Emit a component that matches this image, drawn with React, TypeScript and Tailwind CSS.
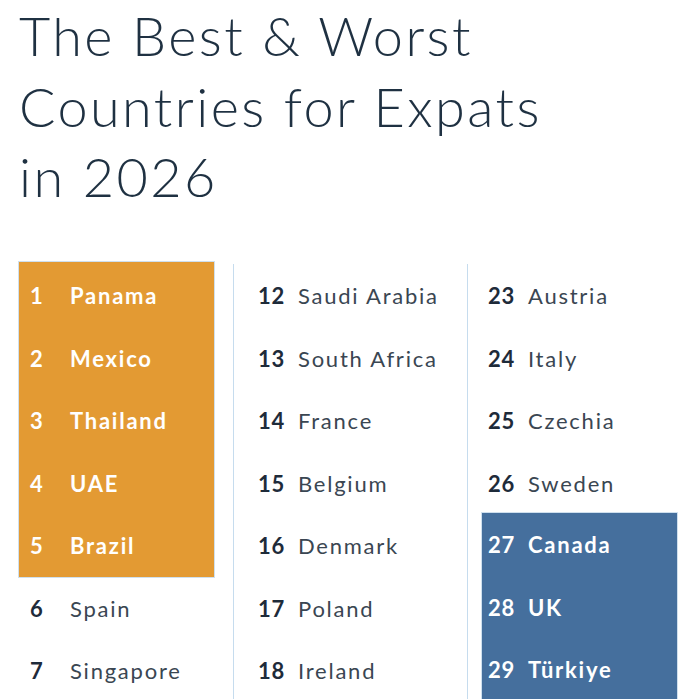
import React from "react";

type Item = { n: number; name: string };

const col1: Item[] = [
  { n: 1, name: "Panama" },
  { n: 2, name: "Mexico" },
  { n: 3, name: "Thailand" },
  { n: 4, name: "UAE" },
  { n: 5, name: "Brazil" },
];
const col1b: Item[] = [
  { n: 6, name: "Spain" },
  { n: 7, name: "Singapore" },
];
const col2: Item[] = [
  { n: 12, name: "Saudi Arabia" },
  { n: 13, name: "South Africa" },
  { n: 14, name: "France" },
  { n: 15, name: "Belgium" },
  { n: 16, name: "Denmark" },
  { n: 17, name: "Poland" },
  { n: 18, name: "Ireland" },
];
const col3: Item[] = [
  { n: 23, name: "Austria" },
  { n: 24, name: "Italy" },
  { n: 25, name: "Czechia" },
  { n: 26, name: "Sweden" },
];
const col3b: Item[] = [
  { n: 27, name: "Canada" },
  { n: 28, name: "UK" },
  { n: 29, name: "Türkiye" },
];

function Row({ item, hi }: { item: Item; hi?: boolean }) {
  return (
    <div className="flex h-[62.5px] items-center text-[22px]">
      <span
        className={
          "w-[40px] shrink-0 font-bold tracking-[0.03em] " +
          (hi ? "text-white" : "text-[#1e2b3a]")
        }
      >
        {item.n}
      </span>
      <span
        className={
          "tracking-[0.08em] " +
          (hi ? "font-bold text-white" : "font-normal text-[#3a4652]")
        }
      >
        {item.name}
      </span>
    </div>
  );
}

export default function App() {
  return (
    <div
      className="w-[700px] h-[699px] overflow-hidden bg-white"
      style={{ fontFamily: "Lato, 'Noto Sans', sans-serif" }}
    >
      <h1 className="pl-[19px] pt-[1px] text-[54px] leading-[70.5px] font-light text-[#1f3142] tracking-[0.045em]">
        The Best &amp; Worst
        <br />
        Countries for Expats
        <br />
        in 2026
      </h1>
      <div className="mt-[48px] grid grid-cols-[233px_234px_233px]">
        <div className="pl-[18px]">
          <div className="w-[197px] border border-[#cfe0ee] bg-[#e39a33] pl-[11px] pt-[3px]">
            {col1.map((it) => (
              <Row key={it.n} item={it} hi />
            ))}
          </div>
          <div className="pl-[12px] -mt-[1px]">
            {col1b.map((it) => (
              <Row key={it.n} item={it} />
            ))}
          </div>
        </div>
        <div className="mt-[3px] border-l border-[#c6dcee] pl-[24px] pt-[1px] h-[436px]">
          {col2.map((it) => (
            <Row key={it.n} item={it} />
          ))}
        </div>
        <div className="mt-[3px] border-l border-[#c6dcee] pl-[13px] pt-[1px] h-[436px]">
          <div className="pl-[7px]">
            {col3.map((it) => (
              <Row key={it.n} item={it} />
            ))}
          </div>
          <div className="-mt-[3px] w-[197px] border border-[#cfe0ee] bg-[#456f9d] pl-[6px] pt-[1px]">
            {col3b.map((it) => (
              <Row key={it.n} item={it} hi />
            ))}
          </div>
        </div>
      </div>
    </div>
  );
}
